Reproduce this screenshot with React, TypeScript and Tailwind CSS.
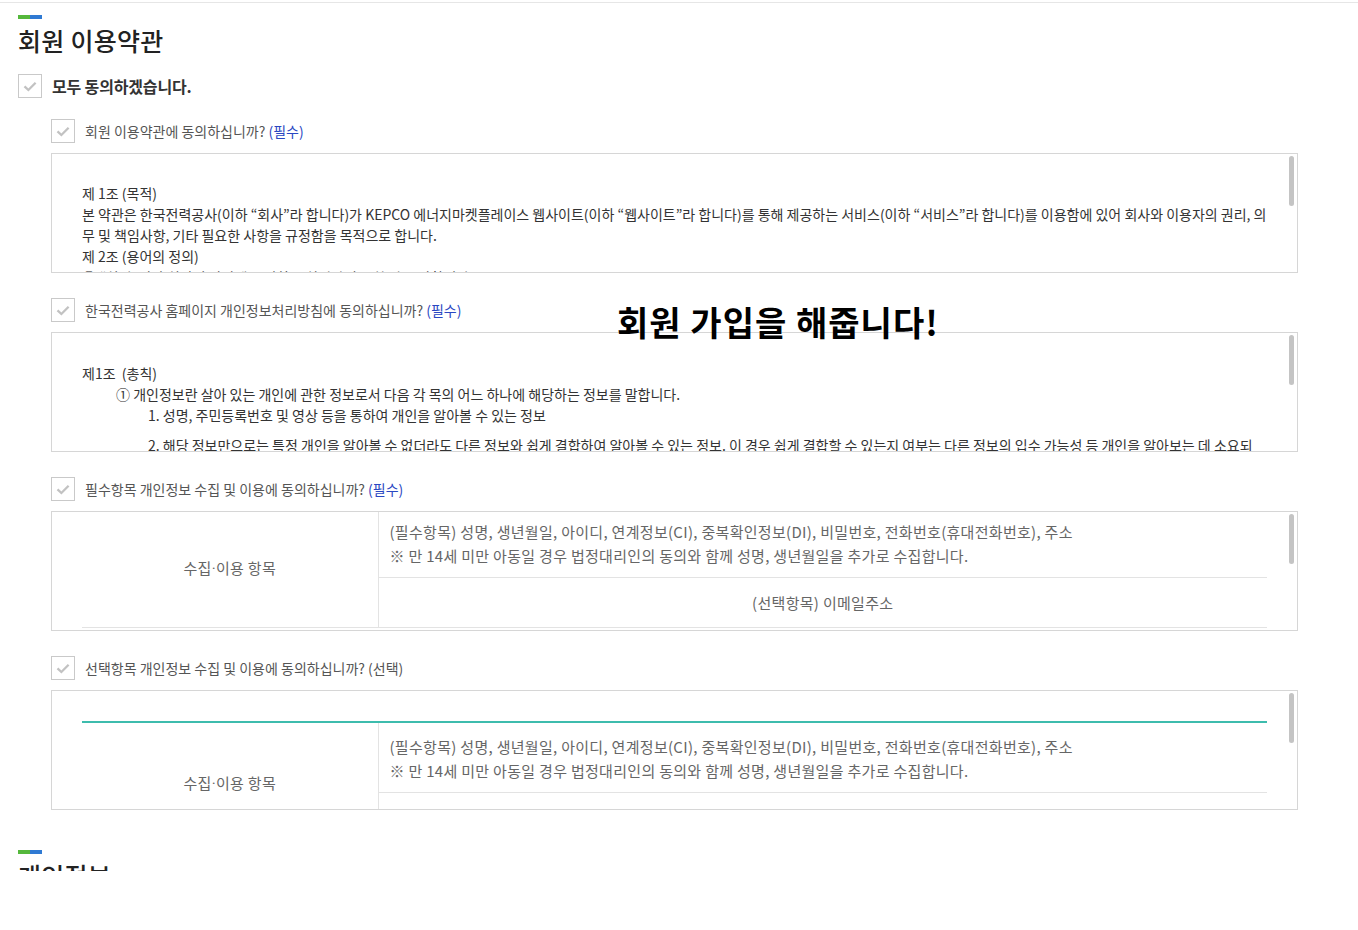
import React from 'react';

const FONT = { fontFamily: '"Noto Sans CJK KR", "Noto Sans", sans-serif' };

// --- checkbox with grey tick ---
const Check = () => (
  <span className="w-6 h-6 border border-[#c9c9c9] bg-white flex items-center justify-center shrink-0">
    <svg width="14" height="11" viewBox="0 0 14 11">
      <path d="M1.5 5.3l3.9 3.7L12.6 1.8" fill="none" stroke="#c2c2c2" strokeWidth="2.3" />
    </svg>
  </span>
);

const SectionBar = () => (
  <div className="flex h-[4px] w-[24px]">
    <span className="w-[12px] bg-[#55b83c]" />
    <span className="w-[12px] bg-[#2f7ad3]" />
  </div>
);

const AgreeRow = ({ label, tag, required = true }: { label: string; tag: string; required?: boolean }) => (
  <div className="flex items-center gap-[10px] h-6 ml-[33px]">
    <Check />
    <p className="text-[14px] text-[#555]">
      {label} <span className={required ? 'text-[#2a47c2]' : 'text-[#555]'}>{tag}</span>
    </p>
  </div>
);

// --- scroll box (overflow clipped, thumb drawn on top) ---
const ScrollBox = ({ children }: { children: React.ReactNode }) => (
  <div className="relative ml-[33px] mt-[10px] h-[120px] border border-[#d6d6d6] bg-white overflow-hidden">
    {children}
    <span className="absolute right-[3px] top-[2px] w-[5px] h-[50px] rounded-full bg-[#c4c4c4]" />
  </div>
);

const UseTable = ({ offset }: { offset: string }) => (
  <table className={`ml-[30px] w-[1185px] border-collapse border-t-2 border-[#3dbcad] text-[15px] text-[#666] tracking-[0.02em] ${offset}`}>
    <tbody>
      <tr>
        <td rowSpan={2} className="w-[296px] pt-[3px] text-center border-r border-b border-[#e3e3e3] align-middle">
          수집<span style={{ fontFamily: 'Roboto, sans-serif' }}>·</span>이용 항목
        </td>
        <td className="h-[70px] px-[11px] pt-[3px] leading-[24px] border-b border-[#e3e3e3] align-middle">
          <p>(필수항목) 성명, 생년월일, 아이디, 연계정보(CI), 중복확인정보(DI), 비밀번호, 전화번호(휴대전화번호), 주소</p>
          <p>※ 만 14세 미만 아동일 경우 법정대리인의 동의와 함께 성명, 생년월일을 추가로 수집합니다.</p>
        </td>
      </tr>
      <tr>
        <td className="h-[50px] pt-[2px] text-center border-b border-[#e3e3e3] align-middle">(선택항목) 이메일주소</td>
      </tr>
    </tbody>
  </table>
);

export default function App() {
  return (
    <div className="relative h-[871px] overflow-hidden bg-white" style={FONT}>
      <div className="mt-[2px] h-px bg-[#e6e6e6]" />

      <div className="pl-[18px] w-[1298px]">
        {/* 회원 이용약관 */}
        <div className="pt-[12px]">
          <SectionBar />
          <h1 className="mt-[4px] text-[25px] leading-[34px] text-[#222] font-medium tracking-[0.01em]">회원 이용약관</h1>
        </div>

        <div className="mt-[17px] flex items-center gap-[10px] h-6">
          <Check />
          <p className="text-[16px] font-bold tracking-[-0.01em] text-[#333]">모두 동의하겠습니다.</p>
        </div>

        {/* 1. 회원 이용약관 */}
        <div className="mt-[21px]">
          <AgreeRow label="회원 이용약관에 동의하십니까?" tag="(필수)" />
          <ScrollBox>
            <div className="pl-[30px] pt-[29px] text-[14px] leading-[21px] text-[#333] whitespace-nowrap">
              <p>제 1조 (목적)</p>
              <p>본 약관은 한국전력공사(이하 “회사”라 합니다)가 KEPCO 에너지마켓플레이스 웹사이트(이하 “웹사이트”라 합니다)를 통해 제공하는 서비스(이하 “서비스”라 합니다)를 이용함에 있어 회사와 이용자의 권리, 의</p>
              <p>무 및 책임사항, 기타 필요한 사항을 규정함을 목적으로 합니다.</p>
              <p>제 2조 (용어의 정의)</p>
              <p>① “회원”이란 회사의 약관에 동의하고 회원가입을 한 자를 말합니다.</p>
            </div>
          </ScrollBox>
        </div>

        {/* 2. 개인정보처리방침 */}
        <div className="mt-[25px]">
          <AgreeRow label="한국전력공사 홈페이지 개인정보처리방침에 동의하십니까?" tag="(필수)" />
          <ScrollBox>
            <div className="pl-[30px] pt-[30px] text-[14px] leading-[21px] text-[#333] whitespace-nowrap">
              <p>제1조&nbsp;&nbsp;(총칙)</p>
              <p className="pl-[34px]">① 개인정보란 살아 있는 개인에 관한 정보로서 다음 각 목의 어느 하나에 해당하는 정보를 말합니다.</p>
              <p className="pl-[66px]">1. 성명, 주민등록번호 및 영상 등을 통하여 개인을 알아볼 수 있는 정보</p>
              <p className="pl-[66px] mt-[9px]">2. 해당 정보만으로는 특정 개인을 알아볼 수 없더라도 다른 정보와 쉽게 결합하여 알아볼 수 있는 정보. 이 경우 쉽게 결합할 수 있는지 여부는 다른 정보의 입수 가능성 등 개인을 알아보는 데 소요되</p>
            </div>
          </ScrollBox>
        </div>

        {/* 3. 필수항목 */}
        <div className="mt-[25px]">
          <AgreeRow label="필수항목 개인정보 수집 및 이용에 동의하십니까?" tag="(필수)" />
          <ScrollBox>
            <UseTable offset="-mt-[6px]" />
          </ScrollBox>
        </div>

        {/* 4. 선택항목 */}
        <div className="mt-[25px]">
          <AgreeRow label="선택항목 개인정보 수집 및 이용에 동의하십니까?" tag="(선택)" required={false} />
          <ScrollBox>
            <UseTable offset="mt-[30px]" />
          </ScrollBox>
        </div>

        {/* 개인정보 */}
        <div className="mt-[40px]">
          <SectionBar />
          <h2 className="mt-[4px] text-[25px] leading-[34px] text-[#222] font-medium tracking-[0.01em]">개인정보</h2>
        </div>
      </div>

      {/* overlay message */}
      <p className="absolute left-[617px] top-[303px] text-[34px] leading-[38px] font-bold text-black tracking-[0.03em]">
        회원 가입을 해줍니다!
      </p>
    </div>
  );
}
